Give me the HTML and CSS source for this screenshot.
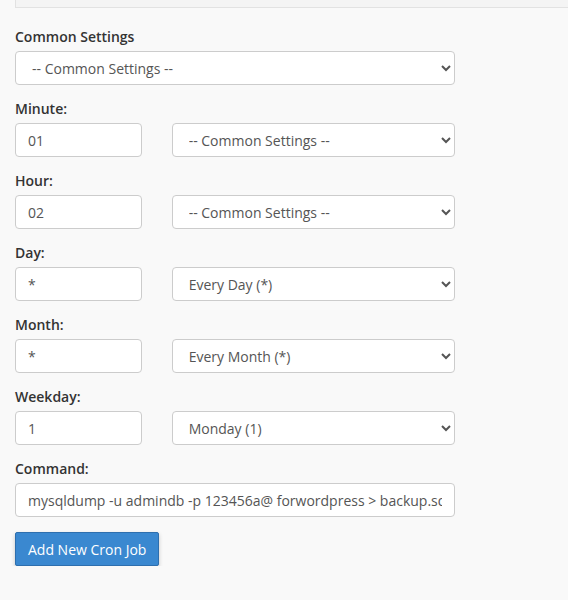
FILE: index.html
```html
<!DOCTYPE html>
<html>
<head>
<meta charset="utf-8">
<link rel="stylesheet" href="styles.css">
</head>
<body>
<div class="top-panel"></div>
<form class="cron-form">
  <div class="group">
    <label class="lbl">Common Settings</label>
    <select class="ctl sel"><option>-- Common Settings --</option></select>
  </div>
  <div class="group">
    <label class="lbl">Minute:</label>
    <div class="pair">
      <input class="ctl" type="text" value="01">
      <select class="ctl sel"><option>-- Common Settings --</option></select>
    </div>
  </div>
  <div class="group">
    <label class="lbl">Hour:</label>
    <div class="pair">
      <input class="ctl" type="text" value="02">
      <select class="ctl sel"><option>-- Common Settings --</option></select>
    </div>
  </div>
  <div class="group">
    <label class="lbl">Day:</label>
    <div class="pair">
      <input class="ctl" type="text" value="*">
      <select class="ctl sel"><option>Every Day (*)</option></select>
    </div>
  </div>
  <div class="group">
    <label class="lbl">Month:</label>
    <div class="pair">
      <input class="ctl" type="text" value="*">
      <select class="ctl sel"><option>Every Month (*)</option></select>
    </div>
  </div>
  <div class="group">
    <label class="lbl">Weekday:</label>
    <div class="pair">
      <input class="ctl" type="text" value="1">
      <select class="ctl sel"><option>Monday (1)</option></select>
    </div>
  </div>
  <div class="group">
    <label class="lbl">Command:</label>
    <input class="ctl" type="text" value="mysqldump -u admindb -p 123456a@ forwordpress &gt; backup.sql">
  </div>
  <button class="btn" type="button">Add New Cron Job</button>
</form>
</body>
</html>
```
FILE: styles.css
```css
html, body {
  margin: 0;
  padding: 0;
  background: #f9f9f9;
  font-family: "Open Sans", "Liberation Sans", sans-serif;
  font-size: 14px;
  color: #333;
}
body {
  padding: 0 0 0 15px;
}
.top-panel {
  box-sizing: border-box;
  height: 8px;
  background: #f4f4f4;
  border-left: 1px solid #e2e2e2;
  border-bottom: 1px solid #e2e2e2;
}
.cron-form {
  width: 440px;
  padding-top: 19px;
}
.group {
  display: flex;
  flex-direction: column;
  margin-bottom: 14px;
}
.lbl {
  font-weight: 600;
  line-height: 20px;
  margin-bottom: 4px;
  color: #333;
}
.pair {
  display: grid;
  grid-template-columns: 126.67px 1fr;
  column-gap: 30px;
}
.ctl {
  box-sizing: border-box;
  height: 34px;
  width: 100%;
  margin: 0;
  border: 1px solid #ccc;
  border-radius: 4px;
  background-color: #fff;
  font-family: "Open Sans", "Liberation Sans", sans-serif;
  font-size: 14px;
  color: #555;
  padding: 6px 12px;
  outline: none;
}
.sel {
  padding: 6px 8px 6px 12px;
}
.btn {
  margin-top: 1px;
  height: 34px;
  padding: 6px 12px;
  font-family: "Open Sans", "Liberation Sans", sans-serif;
  font-size: 14px;
  color: #fff;
  background: #3a88d0;
  border: 1px solid #2e6fae;
  border-radius: 2px;
  box-shadow: 0 2px 4px rgba(0,0,0,0.2);
}
```
